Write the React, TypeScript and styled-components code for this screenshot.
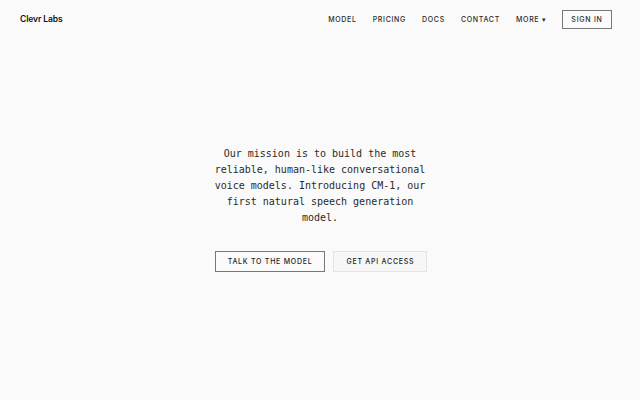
import React from "react";
import styled, { createGlobalStyle } from "styled-components";

const Global = createGlobalStyle`
  html, body { margin: 0; padding: 0; background: #fafafa; }
  body { font-family: Inter, "Liberation Sans", sans-serif; color: #1a1a1a; }
`;

const Page = styled.div`
  width: 640px;
  height: 400px;
  display: flex;
  flex-direction: column;
  background: #fafafa;
`;

const Header = styled.header`
  height: 38px;
  display: flex;
  align-items: center;
  justify-content: space-between;
  padding: 0 28px 0 20px;
`;

const Brand = styled.div`
  font-size: 8.5px;
  font-weight: 600;
  color: #111;
  letter-spacing: -0.1px;
`;

const Nav = styled.nav`
  display: flex;
  align-items: center;
  gap: 16px;
`;

const NavLink = styled.a`
  font-size: 7px;
  font-weight: 500;
  letter-spacing: 0.7px;
  color: #2a2a2a;
  text-transform: uppercase;
  display: flex;
  align-items: center;
  gap: 3px;
`;

const Caret = styled.span`
  font-size: 7px;
  line-height: 1;
`;

const SignIn = styled.button`
  font-family: inherit;
  font-size: 7px;
  font-weight: 500;
  letter-spacing: 0.75px;
  color: #2a2a2a;
  background: transparent;
  border: 1px solid #777;
  height: 19px;
  width: 50px;
  padding: 0;
  margin-left: -1px;
`;

const Hero = styled.main`
  flex: 1;
  display: flex;
  flex-direction: column;
  align-items: center;
  padding-top: 108px;
`;

const Mission = styled.p`
  margin: 0;
  width: 214px;
  text-align: center;
  font-family: "DejaVu Sans Mono", "Liberation Mono", monospace;
  font-size: 10px;
  line-height: 16px;
  color: #2a2a2a;
`;

const Actions = styled.div`
  display: flex;
  gap: 8px;
  margin-top: 25px;
  margin-left: 2px;
`;

const Action = styled.button<{ $primary?: boolean }>`
  font-family: Inter, "Liberation Sans", sans-serif;
  font-size: 7px;
  font-weight: 500;
  letter-spacing: 0.75px;
  color: #222;
  height: 21px;
  padding: 0 12px;
  background: ${(p) => (p.$primary ? "transparent" : "#f7f7f7")};
  border: 1px solid ${(p) => (p.$primary ? "#777" : "#e4e4e4")};
`;

export default function App() {
  return (
    <Page>
      <Global />
      <Header>
        <Brand>Clevr Labs</Brand>
        <Nav>
          <NavLink>Model</NavLink>
          <NavLink>Pricing</NavLink>
          <NavLink>Docs</NavLink>
          <NavLink>Contact</NavLink>
          <NavLink>
            More <Caret>▾</Caret>
          </NavLink>
          <SignIn>SIGN IN</SignIn>
        </Nav>
      </Header>
      <Hero>
        <Mission>
          Our mission is to build the most reliable, human-like conversational
          voice models. Introducing CM-1, our first natural speech generation
          model.
        </Mission>
        <Actions>
          <Action $primary>TALK TO THE MODEL</Action>
          <Action>GET API ACCESS</Action>
        </Actions>
      </Hero>
    </Page>
  );
}
